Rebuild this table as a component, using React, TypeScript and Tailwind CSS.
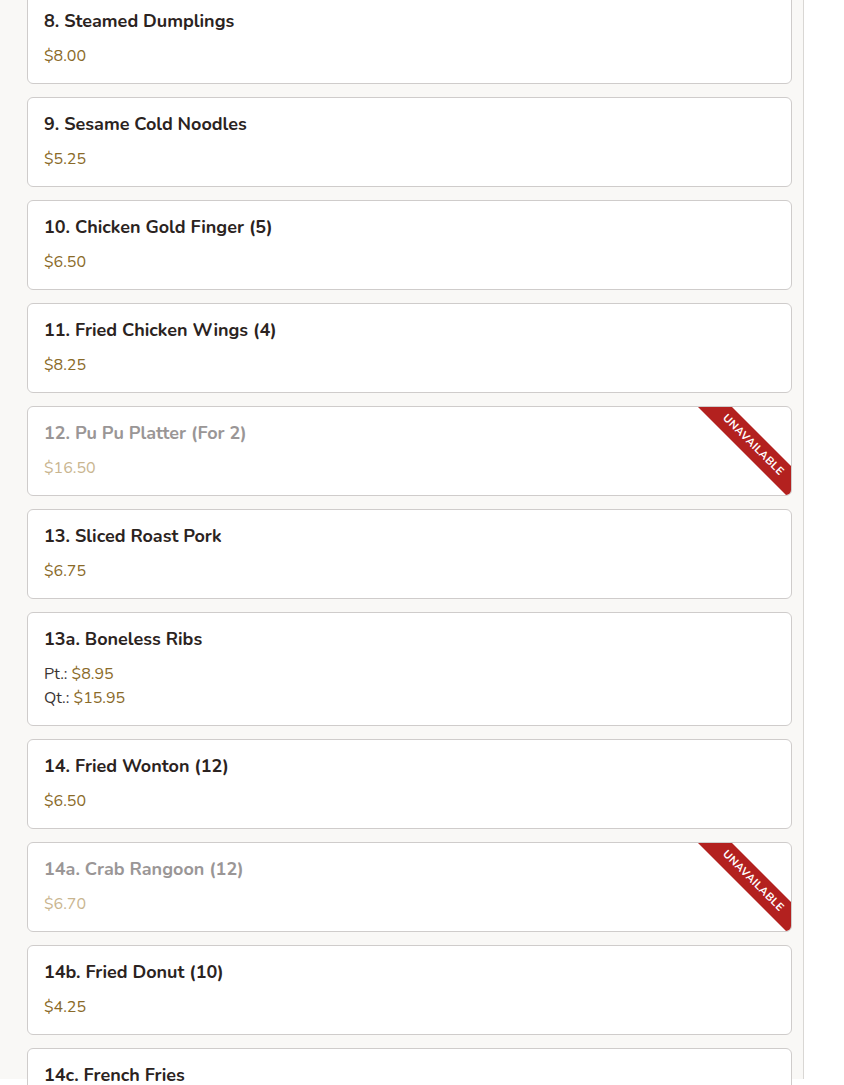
type Item = {
  name: string;
  price?: string;
  sizes?: { label: string; price: string }[];
  unavailable?: boolean;
};

const items: Item[] = [
  { name: "8. Steamed Dumplings", price: "$8.00" },
  { name: "9. Sesame Cold Noodles", price: "$5.25" },
  { name: "10. Chicken Gold Finger (5)", price: "$6.50" },
  { name: "11. Fried Chicken Wings (4)", price: "$8.25" },
  { name: "12. Pu Pu Platter (For 2)", price: "$16.50", unavailable: true },
  { name: "13. Sliced Roast Pork", price: "$6.75" },
  {
    name: "13a. Boneless Ribs",
    sizes: [
      { label: "Pt.:", price: "$8.95" },
      { label: "Qt.:", price: "$15.95" },
    ],
  },
  { name: "14. Fried Wonton (12)", price: "$6.50" },
  { name: "14a. Crab Rangoon (12)", price: "$6.70", unavailable: true },
  { name: "14b. Fried Donut (10)", price: "$4.25" },
  { name: "14c. French Fries", price: "$3.50" },
];

function MenuCard({ item }: { item: Item }) {
  const off = item.unavailable;
  return (
    <div className="relative overflow-hidden rounded-md border border-[#cfcccb] bg-white px-4 pt-4 pb-[15px]">
      {off && (
        <div className="absolute right-[-37px] top-[26px] flex h-6 w-[150px] rotate-45 items-center justify-center bg-[#b3211f] text-[11px] font-bold uppercase tracking-[0.4px] text-white">
          Unavailable
        </div>
      )}
      <h3
        className={`mb-[13px] text-[18px] font-bold leading-[20px] ${
          off ? "text-[#9a9696]" : "text-[#2b2321]"
        }`}
      >
        {item.name}
      </h3>
      {item.price && (
        <p
          className={`text-[16px] leading-6 ${
            off ? "text-[#c9b58f]" : "text-[#8a6a28]"
          }`}
        >
          {item.price}
        </p>
      )}
      {item.sizes &&
        item.sizes.map((s) => (
          <p key={s.label} className="text-[16px] leading-6 text-[#3a3433]">
            {s.label} <span className="text-[#8a6a28]">{s.price}</span>
          </p>
        ))}
    </div>
  );
}

export default function App() {
  return (
    <div
      className="h-[1085px] overflow-hidden bg-white"
      style={{ fontFamily: "Nunito, Lato, 'Open Sans', sans-serif" }}
    >
      <div className="h-full w-[804px] border-r border-[#d9d7d4] bg-[#f9f8f6] pl-[27px] pr-[11px]">
        <div className="-mt-[6px] flex flex-col gap-[13px]">
          {items.map((item) => (
            <MenuCard key={item.name} item={item} />
          ))}
        </div>
      </div>
    </div>
  );
}
